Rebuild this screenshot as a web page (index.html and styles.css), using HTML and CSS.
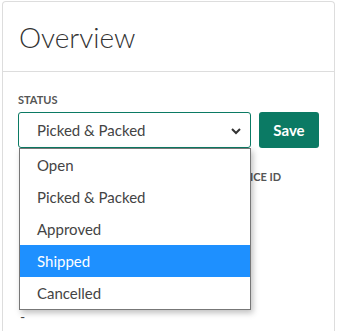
FILE: index.html
```html
<!DOCTYPE html>
<html lang="en">
<head>
  <meta charset="UTF-8" />
  <meta name="viewport" content="width=device-width, initial-scale=1.0"/>
  <title>Order Overview</title>
  <link rel="stylesheet" href="styles.css">
</head>
<body>

  <div class="card">
    <div class="card-header">
      <h1>Overview</h1>
    </div>

    <div class="card-body">
      <label class="field-label">Status</label>
      <div class="status-row">
        <div class="select-wrap">
          <div class="select">
            <span>Picked &amp; Packed</span>
            <svg class="chevron" width="12" height="8" viewBox="0 0 12 8">
              <path d="M2 2 L6 6 L10 2" fill="none" stroke="#333" stroke-width="2"/>
            </svg>
          </div>
          <!-- open dropdown list -->
          <ul class="options">
            <li>Open</li>
            <li>Picked &amp; Packed</li>
            <li>Approved</li>
            <li class="active">Shipped</li>
            <li>Cancelled</li>
          </ul>
        </div>
        <button class="btn-save">Save</button>
      </div>

      <div class="fields">
        <div class="field">
          <div class="field-value">-</div>
        </div>
        <div class="field">
          <div class="field-label">Invoice ID</div>
        </div>
      </div>
    </div>
  </div>

</body>
</html>
```

FILE: styles.css
```css
body {
  font-family: 'Lato', 'Open Sans', sans-serif;
  background: #fff;
  color: #444;
  margin: 0;
  padding: 0;
}

.card {
  margin: 1px 2px 0 2px;
  width: 331px;
  border: 1px solid #ddd;
  border-bottom: none;
  border-radius: 4px 4px 0 0;
  min-height: 340px;
}

.card-header {
  height: 69px;
  border-bottom: 1px solid #ddd;
  padding: 0 16px;
  display: flex;
  align-items: center;
}

h1 {
  margin: 0;
  font-size: 28px;
  font-weight: 300;
  color: #333;
}

.card-body {
  padding: 21px 15px 0 15px;
}

.field-label {
  display: block;
  font-size: 11px;
  font-weight: bold;
  text-transform: uppercase;
  color: #555;
  line-height: 14px;
}

.status-row {
  display: flex;
  gap: 8px;
  margin-top: 5px;
}

.select-wrap {
  position: relative;
  width: 233px;
}

.select {
  height: 34px;
  border: 1px solid #0b7a64;
  border-radius: 3px;
  display: flex;
  align-items: center;
  justify-content: space-between;
  padding: 0 8px 0 18px;
  font-size: 15px;
  color: #444;
}

.chevron {
  margin-top: 1px;
}

.options {
  position: absolute;
  top: 36px;
  left: 1px;
  right: 0;
  margin: 0;
  padding: 0;
  list-style: none;
  background: #fff;
  border: 1px solid #777;
  box-shadow: 2px 3px 6px rgba(0,0,0,0.25);
  z-index: 2;
}

.options li {
  height: 32px;
  line-height: 32px;
  padding-left: 17px;
  font-size: 15px;
  color: #444;
}

.options li.active {
  background: #1e90ff;
  color: #fff;
}

.btn-save {
  width: 60px;
  height: 36px;
  background-color: #0b7a64;
  color: #fff;
  border: none;
  border-radius: 3px;
  font-family: inherit;
  font-size: 15px;
  font-weight: bold;
  padding: 0;
}

.fields {
  display: grid;
  grid-template-columns: 204px 1fr;
  margin-top: 22px;
}

.field-value {
  font-size: 14px;
  color: #444;
  margin-top: 138px;
  padding-left: 2px;
  line-height: 18px;
}
```
